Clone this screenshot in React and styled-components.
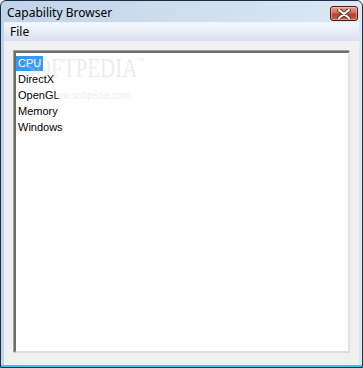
import { useState } from 'react';
import styled, { createGlobalStyle } from 'styled-components';

const GlobalStyle = createGlobalStyle`
    html, body {
        margin: 0;
        padding: 0;
        background: #ffffff;
    }
    * {
        box-sizing: border-box;
    }
`;

const items = ['CPU', 'DirectX', 'OpenGL', 'Memory', 'Windows'];

function CloseGlyph () { //X branco do botão fechar
    return (
        <svg width="14" height="10" viewBox="0 0 14 10">
            <path d="M2 1 L12 9 M12 1 L2 9" stroke="#5a3030" strokeWidth="4" strokeLinecap="round" />
            <path d="M2 1 L12 9 M12 1 L2 9" stroke="#ffffff" strokeWidth="2.2" strokeLinecap="round" />
        </svg>
    );
}

function App () {

    const [selected, setSelected] = useState('CPU');

    return (
        <>
            <GlobalStyle />
            <Window>
                <TitleBar>
                    <Title>Capability Browser</Title>
                    <CloseButton><CloseGlyph /></CloseButton>
                </TitleBar>
                <MenuBar>
                    <MenuItem>File</MenuItem>
                </MenuBar>
                <Client>
                    <TreeBox>
                        <Watermark>
                            <WatermarkLogo>SOFTPEDIA<sup>™</sup></WatermarkLogo>
                            <WatermarkUrl>www.softpedia.com</WatermarkUrl>
                        </Watermark>
                        {items.map(item => (
                            <TreeRow key={item}>
                                <TreeLabel active={item === selected} onClick={() => setSelected(item)}>{item}</TreeLabel>
                            </TreeRow>
                        ))}
                    </TreeBox>
                </Client>
            </Window>
        </>
    );

}

export default App;

const Window = styled.div`
    width: 363px;
    height: 368px;
    display: flex;
    flex-direction: column;
    border: 1px solid #1c2f42;
    border-radius: 6px 6px 0 0;
    background: linear-gradient(90deg, #bfd4ea 0%, #cfe0f0 60%, #dce9f5 100%);
    padding: 0 3px 2px 3px;
    box-shadow: inset 0 -2px 0 #46bde9;
    overflow: hidden;
`;

const TitleBar = styled.div`
    height: 21px;
    flex-shrink: 0;
    display: flex;
    align-items: center;
    justify-content: space-between;
    padding: 0 1px 0 3px;
`;

const Title = styled.div`
    font-family: 'Noto Sans', 'DejaVu Sans', sans-serif;
    font-size: 12px;
    color: #000000;
    line-height: 14px;
    margin-top: 3px;
`;

const CloseButton = styled.div`
    width: 28px;
    height: 15px;
    margin-top: 4px;
    display: flex;
    align-items: center;
    justify-content: center;
    border: 1px solid #4e1a16;
    border-radius: 3px;
    background: linear-gradient(180deg, #e8a493 0%, #d36a55 45%, #b8402c 55%, #c9604a 100%);
    box-shadow: inset 0 0 0 1px rgba(255, 210, 200, 0.5);
`;

const MenuBar = styled.div`
    height: 19px;
    flex-shrink: 0;
    display: flex;
    align-items: center;
    padding-left: 2px;
    background: linear-gradient(180deg, #f4f7fc 0%, #e6ebf6 50%, #d9dff0 100%);
    border-top: 1px solid #eef3fa;
`;

const MenuItem = styled.div`
    font-family: 'Noto Sans', 'DejaVu Sans', sans-serif;
    font-size: 12px;
    color: #000000;
    padding: 0 4px;
    line-height: 16px;
`;

const Client = styled.div`
    flex: 1;
    display: flex;
    flex-direction: column;
    background: #f0f0f0;
    padding: 10px 9px 12px 10px;
`;

const TreeBox = styled.div`
    position: relative;
    flex: 1;
    background: #ffffff;
    border-style: solid;
    border-width: 2px;
    border-color: #6d6d6d #e3e3e3 #dcdcdc #6d6d6d;
    box-shadow: -1px -1px 0 #a0a0a0;
    padding: 2px 0 0 0;
    overflow: hidden;
`;

const TreeRow = styled.div`
    position: relative;
    height: 16px;
    display: flex;
    align-items: center;
`;

const TreeLabel = styled.span`
    font-family: 'Liberation Sans', Arial, sans-serif;
    font-size: 11px;
    line-height: 15px;
    padding: 0 2px;
    color: ${props => props.active ? '#ffffff' : '#000000'};
    background: ${props => props.active ? '#3399ff' : 'transparent'};
    cursor: default;
`;

const Watermark = styled.div`
    position: absolute;
    left: 8px;
    top: 3px;
    pointer-events: none;
    z-index: 2;
    color: rgba(200, 200, 200, 0.35);
`;

const WatermarkLogo = styled.div`
    font-family: 'Liberation Serif', serif;
    font-size: 27px;
    line-height: 24px;
    letter-spacing: 0px;
    transform: scaleX(0.78);
    transform-origin: left top;
    white-space: nowrap;

    sup {
        font-family: 'Liberation Sans', sans-serif;
        font-size: 9px;
        vertical-align: top;
        line-height: 10px;
    }
`;

const WatermarkUrl = styled.div`
    font-family: 'Liberation Sans', sans-serif;
    font-size: 11px;
    margin-top: 9px;
    margin-left: 26px;
    transform: scaleX(0.85);
    transform-origin: left top;
    white-space: nowrap;
`;
